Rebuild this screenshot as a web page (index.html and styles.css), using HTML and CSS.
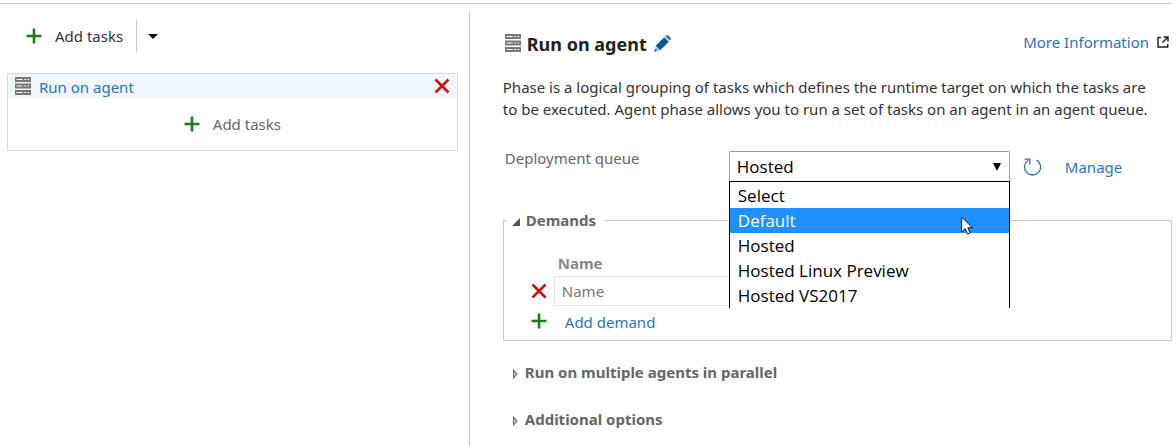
FILE: index.html
```html
<!DOCTYPE html>
<html lang="en">
<head>
<meta charset="utf-8">
<title>Run on agent</title>
<link rel="stylesheet" href="styles.css">
</head>
<body>
<svg class="sprite" aria-hidden="true">
  <symbol id="plus" viewBox="0 0 16 16"><path d="M8 0.5V15.5M0.5 8H15.5" stroke="#1a7d1a" stroke-width="2.6" fill="none"/></symbol>
  <symbol id="cross" viewBox="0 0 16 16"><path d="M1.5 1.5L14.5 14.5M14.5 1.5L1.5 14.5" stroke="#c8120a" stroke-width="2.6" fill="none"/></symbol>
  <symbol id="server" viewBox="0 0 16 18">
    <path d="M0 0H16V5H0ZM0 6.5H16V11.5H0ZM0 13H16V18H0Z" fill="#777"/>
    <path d="M1.5 2.5H7.5M9.3 2.5H11M12.5 2.5H14.2M1.5 9H7.5M9.3 9H11M12.5 9H14.2M1.5 15.5H7.5M9.3 15.5H11M12.5 15.5H14.2" stroke="#fff" stroke-width="1"/>
  </symbol>
</svg>
<div class="page">
  <section class="tasks">
    <div class="toolbar">
      <button class="add" type="button"><svg class="icon"><use href="#plus"/></svg>Add tasks</button>
      <button class="more" type="button" aria-label="More add options"><svg viewBox="0 0 10 5"><path d="M0 0H10L5 5Z" fill="#111"/></svg></button>
    </div>
    <div class="phase">
      <div class="phase-row">
        <svg class="server"><use href="#server"/></svg>
        <a class="phase-name" href="#">Run on agent</a>
        <button type="button" aria-label="Remove phase"><svg class="icon"><use href="#cross"/></svg></button>
      </div>
      <button class="add phase-add" type="button"><svg class="icon"><use href="#plus"/></svg>Add tasks</button>
    </div>
  </section>
  <main class="detail">
    <header class="head">
      <svg class="server"><use href="#server"/></svg>
      <h1>Run on agent</h1>
      <button type="button" aria-label="Rename"><svg class="pencil" viewBox="0 0 17 17"><path d="M0.5 16.5L1.6 11.3L5.7 15.4Z" fill="#8ab3da"/><path d="M1.7 10.8L10.3 2.2L14.8 6.7L6.2 15.3Z" fill="#0b559f"/><path d="M11.2 1.4L12.6 .3Q13.5 -.3 14.4 .5L16.5 2.6Q17.2 3.4 16.7 4.4L15.6 5.8Z" fill="#3b7ab8"/><path d="M0.3 16.7L.9 14.3L2.7 16.1Z" fill="#0b559f"/></svg></button>
      <a class="info" href="#">More Information<svg viewBox="0 0 12 12"><path d="M4 1.5H1V11H10.7V8M6.5 1H11V5.5M11 1L5.5 6.5" fill="none" stroke="#222" stroke-width="1.5"/></svg></a>
    </header>
    <p class="intro">Phase is a logical grouping of tasks which defines the runtime target on which the tasks are to be executed. Agent phase allows you to run a set of tasks on an agent in an agent queue.</p>
    <div class="queue">
      <label for="queue">Deployment queue</label>
      <div class="picker">
        <select id="queue"><option>Hosted</option></select>
        <svg class="arrow" viewBox="0 0 7 7"><path d="M0 0H7L3.5 7Z" fill="#000"/></svg>
        <ul class="menu" role="listbox" aria-label="Deployment queue">
          <li role="option">Select</li>
          <li role="option" class="active" aria-selected="true">Default</li>
          <li role="option">Hosted</li>
          <li role="option">Hosted Linux Preview</li>
          <li role="option">Hosted VS2017</li>
        </ul>
        <svg class="cursor" viewBox="0 0 12 19"><path d="M.6 1V16L4.2 12.7L6.6 18.2L9.2 17L6.8 11.8H11.4Z" fill="#fff" stroke="#111" stroke-width="1"/></svg>
      </div>
      <button type="button" aria-label="Refresh"><svg class="refresh" viewBox="0 0 18 18"><path d="M13.6 2.1A8 8 0 1 1 5.2 2.3M1.5 1.2H6.8V6.5" fill="none" stroke="#2673b8" stroke-width="1.3"/></svg></button>
      <a href="#">Manage</a>
    </div>
    <fieldset class="demands">
      <legend><button class="toggle" type="button" aria-expanded="true"><svg viewBox="0 0 8 8"><path d="M8 0V8H0Z" fill="#555"/></svg>Demands</button></legend>
      <div class="grid">
        <label class="col" for="name">Name</label>
        <button type="button" aria-label="Remove demand"><svg class="icon"><use href="#cross"/></svg></button>
        <input id="name" type="text" placeholder="Name">
        <svg class="icon"><use href="#plus"/></svg>
        <a class="add-demand" href="#">Add demand</a>
      </div>
    </fieldset>
    <button class="toggle section" type="button" aria-expanded="false"><svg viewBox="0 0 8 10"><path d="M2.5 1V9L6 5Z" fill="#ccc" stroke="#777" stroke-width="1.2"/></svg>Run on multiple agents in parallel</button>
    <button class="toggle section" type="button" aria-expanded="false"><svg viewBox="0 0 8 10"><path d="M2.5 1V9L6 5Z" fill="#ccc" stroke="#777" stroke-width="1.2"/></svg>Additional options</button>
  </main>
</div>
</body>
</html>
```
FILE: styles.css
```css
* { box-sizing: border-box; }
body {
  margin: 0;
  padding: 3px 4px 0 0;
  background: #fff;
  color: #333;
  font: 15px/22px "Noto Sans", "Open Sans", sans-serif;
}
button {
  display: flex;
  align-items: center;
  padding: 0;
  border: 0;
  background: none;
  color: inherit;
  font: inherit;
}
svg { display: block; flex: none; }
a { color: #2b73bb; text-decoration: none; }
.sprite { position: absolute; width: 0; height: 0; }
.icon { width: 16px; height: 16px; }
.server { width: 16px; height: 18px; }
.page {
  display: grid;
  grid-template-columns: 2fr 3fr;
  min-height: calc(100vh - 3px);
  padding-top: 7px;
  border-top: 1px solid #c8c8c8;
}
.tasks { padding: 9px 11px 0 7px; }
.toolbar { display: flex; height: 32px; margin-bottom: 21px; padding-left: 19px; }
.add { gap: 13px; }
.more { margin-left: 13px; padding-left: 11px; border-left: 1px solid #c8c8c8; }
.more svg { width: 10px; height: 5px; }
.phase { border: 1px solid #d9d9d9; }
.phase-row {
  display: flex;
  align-items: center;
  height: 24px;
  margin-right: 1px;
  padding: 0 6px 0 7px;
  background: #eff6fd;
}
.phase-name { flex: 1; margin-left: 8px; padding-top: 2px; }
.phase-add { height: 52px; margin: 0 auto; color: #666; }
.detail { padding: 19px 0 0 33px; border-left: 1px solid #c8c8c8; }
.head { display: flex; align-items: center; height: 26px; margin-bottom: 20px; padding-left: 2px; }
.server + h1 { margin: 0 7px 0 6px; padding-top: 2px; color: #222; font-size: 18px; line-height: 28px; }
.pencil { width: 17px; height: 17px; }
.info { display: flex; align-items: center; gap: 8px; margin-left: auto; padding: 0 3px 2px 0; }
.info svg { width: 12px; height: 12px; }
.intro { margin: 0 0 31px; padding-right: 12px; }
.queue { display: flex; align-items: center; margin-bottom: 26px; }
.queue label { align-self: flex-start; flex: 0 0 226px; padding: 0 0 8px 2px; color: #666; line-height: 14px; }
.picker { position: relative; flex: 0 0 42%; color: #000; font-family: "Open Sans", "Noto Sans", sans-serif; font-size: 17px; }
.picker select {
  display: block;
  width: 100%;
  height: 31px;
  padding: 0 7px;
  border: 1px solid #7ba7e0;
  outline: 0;
  border-radius: 1px;
  background: #fff;
  appearance: none;
  color: #000;
  font: inherit;
}
.arrow { position: absolute; top: 12px; right: 9px; width: 8px; height: 8px; }
.menu {
  position: absolute;
  z-index: 1;
  top: 30px;
  left: 0;
  right: 0;
  margin: 0;
  padding: 1px 0 0;
  border: 1px solid #000;
  border-bottom: 0;
  background: #fff;
  line-height: 25px;
  list-style: none;
}
.menu li { padding-left: 8px; }
.menu .active { background: #1e90ff; color: #fff; }
.cursor { position: absolute; z-index: 2; top: 65px; right: 37px; width: 12px; height: 19px; }
.refresh { width: 18px; height: 18px; }
.queue button { margin: 0 24px 0 13px; }
.demands { min-width: 0; margin: 0 0 19px; padding: 0 0 5px; border: 1px solid #c8c8c8; }
.demands legend { margin-left: 2px; padding: 0 8px 0 6px; }
.toggle { gap: 6px; color: #666; font-weight: 700; line-height: 24px; }
.toggle svg { width: 8px; height: 8px; margin-top: 4px; }
.grid {
  display: grid;
  grid-template-columns: 16px 1fr;
  align-items: center;
  column-gap: 7px;
  padding: 20px 200px 0 27px;
}
.col { grid-column: 2; padding: 0 0 2px 4px; color: #888; font-weight: 700; }
.grid input {
  width: 100%;
  height: 30px;
  padding: 0 7px;
  border: 1px solid #e3e3e3;
  font: inherit;
}
.grid input::placeholder { color: #777; }
.add-demand { padding: 5px 0 2px 11px; }
.section { margin: 0 0 23px 8px; }
.section svg { height: 10px; }
```
